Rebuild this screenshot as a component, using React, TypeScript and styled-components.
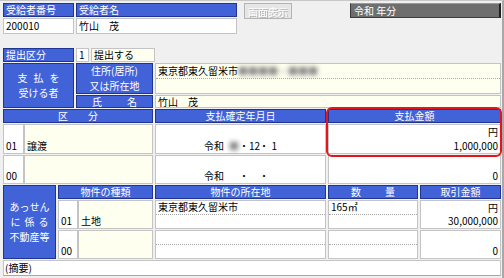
import styled, { createGlobalStyle } from 'styled-components';

const BLUE = '#4262d8';
const BLUE_EDGE = '#1f3596';
const CREAM = '#fffff0';
const LINE = '#c4c4c4';

const GlobalStyle = createGlobalStyle`
  html, body {
    margin: 0;
    padding: 0;
    background: #f0f0f0;
  }
  body {
    font-family: "Noto Sans CJK JP", "Noto Sans", sans-serif;
    font-size: 10px;
    color: #000;
  }
`;

const Page = styled.div`
  position: relative;
  box-sizing: border-box;
  width: 504px;
  height: 278px;
  padding: 2px 1px 0 3px;
  border-top: 1px solid #c8c8c8;
  border-right: 2px solid #a8a8a8;
  background: #f0f0f0;
  overflow: hidden;
`;

const TopBar = styled.div`
  display: flex;
  align-items: flex-start;
`;

const RecipientTable = styled.div`
  display: grid;
  grid-template-columns: 71px 161px;
  grid-template-rows: 14px 16px;
  column-gap: 2px;
  row-gap: 1px;
`;

const HeadCell = styled.div<{ $left?: boolean }>`
  box-sizing: border-box;
  background: ${BLUE};
  border: 1px solid ${BLUE_EDGE};
  color: #fff;
  display: flex;
  align-items: center;
  justify-content: ${(p) => (p.$left ? 'flex-start' : 'center')};
  padding: ${(p) => (p.$left ? '0 2px' : '0')};
  line-height: 1;
  white-space: nowrap;
`;

const SpreadHead = styled(HeadCell)<{ $pad: number }>`
  justify-content: space-between;
  padding: 0 ${(p) => p.$pad}px;
`;

const LabelBlock = styled(HeadCell)<{ $rows: number }>`
  grid-row: span ${(p) => p.$rows};
  flex-direction: column;
  gap: 5px;
`;

const LabelLine = styled.span<{ $spacing?: number }>`
  letter-spacing: ${(p) => p.$spacing ?? 0}px;
  margin-right: -${(p) => p.$spacing ?? 0}px;
`;

const ValueCell = styled.div<{ $cream?: boolean; $right?: boolean }>`
  box-sizing: border-box;
  background: ${(p) => (p.$cream ? CREAM : '#fff')};
  border: 1px solid ${LINE};
  padding: 0 2px;
  display: flex;
  align-items: center;
  justify-content: ${(p) => (p.$right ? 'flex-end' : 'flex-start')};
  line-height: 1;
  white-space: nowrap;
`;

const DisabledButton = styled.div`
  box-sizing: border-box;
  margin-left: 7px;
  width: 48px;
  height: 16px;
  background: #e6e6e6;
  border: 1px solid #b4b4b4;
  display: flex;
  align-items: center;
  justify-content: center;
  color: #fff;
  text-shadow: 1px 1px 0 #b0b0b0;
  filter: blur(0.5px);
`;

const YearBox = styled.div`
  box-sizing: border-box;
  margin-left: auto;
  width: 151px;
  height: 15px;
  background: #6e6e6e;
  border: 1px solid #3c3c3c;
  border-right: 2px solid #1e1e1e;
  border-top-color: #9a9a9a;
  color: #fff;
  display: flex;
  align-items: center;
  padding-left: 3px;
  line-height: 1;
`;

const Form = styled.div`
  margin-top: 14px;
  display: flex;
  flex-direction: column;
  gap: 1px;
`;

const SubmitRow = styled.div`
  display: grid;
  grid-template-columns: 71px 13px 64px;
  grid-template-rows: 14px;
  column-gap: 2px;
`;

const PayeeBlock = styled.div`
  display: grid;
  grid-template-columns: 71px 77px 1fr;
  grid-template-rows: 31px 13px;
  column-gap: 2px;
  row-gap: 1px;
`;

const SectionA = styled.div`
  display: grid;
  grid-template-columns: 150px 171px 1fr;
  grid-template-rows: 14px 30px 29px;
  column-gap: 2px;
  row-gap: 1px;
`;

const SectionB = styled.div`
  display: grid;
  grid-template-columns: 53px 95px 171px 90px 1fr;
  grid-template-rows: 14px 29px 29px;
  column-gap: 2px;
  row-gap: 1px;
`;

const CodeSplit = styled.div`
  display: flex;
  min-width: 0;
`;

const Stack = styled.div<{ $cream?: boolean; $width?: number; $right?: boolean }>`
  box-sizing: border-box;
  ${(p) => (p.$width ? `width: ${p.$width}px; flex: none;` : 'flex: 1;')}
  background: ${(p) => (p.$cream ? CREAM : '#fff')};
  border: 1px solid ${LINE};
  display: grid;
  grid-template-rows: 1fr 1fr;
  text-align: ${(p) => (p.$right ? 'right' : 'left')};
  line-height: 1;
  white-space: nowrap;
`;

const Line = styled.div<{ $dotted?: boolean; $center?: boolean }>`
  display: flex;
  align-items: center;
  padding: 0 2px;
  border-bottom: ${(p) => (p.$dotted ? '1px dotted #a8a8a8' : 'none')};
  justify-content: ${(p) => (p.$center ? 'center' : 'normal')};
`;

const RightLine = styled(Line)`
  justify-content: flex-end;
`;

const DateText = styled.div`
  display: flex;
  align-items: center;
`;

const Slot = styled.span<{ $w: number }>`
  display: inline-block;
  width: ${(p) => p.$w}px;
  text-align: right;
`;

const Blurred = styled.span`
  color: #808080;
  filter: blur(2.6px);
`;

const MemoRow = styled.div`
  box-sizing: border-box;
  height: 16px;
  background: #fff;
  border: 1px solid ${LINE};
  border-bottom: 1px solid #a8a8a8;
  display: flex;
  align-items: center;
  padding-left: 1px;
  line-height: 1;
`;

const Highlight = styled.div`
  position: absolute;
  left: 326px;
  top: 106px;
  width: 176px;
  height: 50px;
  box-sizing: border-box;
  border: 2.5px solid #e4161c;
  border-radius: 6px;
  pointer-events: none;
`;

const DateValue = ({ year, month, day }: { year?: boolean; month?: string; day?: string }) => (
  <DateText>
    <span>令和</span>
    <Slot $w={15}>{year ? <Blurred>■</Blurred> : ''}</Slot>
    <span>・</span>
    <Slot $w={10}>{month ?? ''}</Slot>
    <span>・</span>
    <Slot $w={8}>{day ?? ''}</Slot>
  </DateText>
);

const App = () => {
  return (
    <Page>
      <GlobalStyle />
      <TopBar>
        <RecipientTable>
          <HeadCell $left>受給者番号</HeadCell>
          <HeadCell $left>受給者名</HeadCell>
          <ValueCell>200010</ValueCell>
          <ValueCell>竹山　茂</ValueCell>
        </RecipientTable>
        <DisabledButton>画面表示</DisabledButton>
        <YearBox>令和 年分</YearBox>
      </TopBar>

      <Form>
        <SubmitRow>
          <HeadCell $left>提出区分</HeadCell>
          <ValueCell>1</ValueCell>
          <ValueCell $cream>提出する</ValueCell>
        </SubmitRow>

        <PayeeBlock>
          <LabelBlock $rows={2}>
            <LabelLine $spacing={6}>支払を</LabelLine>
            <LabelLine>受ける者</LabelLine>
          </LabelBlock>
          <LabelBlock $rows={1}>
            <span>住所(居所)</span>
            <span>又は所在地</span>
          </LabelBlock>
          <Stack $cream>
            <Line $dotted>
              東京都東久留米市<Blurred>■■■■－■■■</Blurred>
            </Line>
            <Line />
          </Stack>
          <SpreadHead $pad={15}>
            <span>氏</span>
            <span>名</span>
          </SpreadHead>
          <ValueCell $cream>竹山　茂</ValueCell>
        </PayeeBlock>

        <SectionA>
          <SpreadHead $pad={54}>
            <span>区</span>
            <span>分</span>
          </SpreadHead>
          <HeadCell>支払確定年月日</HeadCell>
          <HeadCell>支払金額</HeadCell>

          <CodeSplit>
            <Stack $width={21}>
              <Line />
              <Line>01</Line>
            </Stack>
            <Stack $cream>
              <Line />
              <Line>譲渡</Line>
            </Stack>
          </CodeSplit>
          <Stack>
            <Line />
            <Line $center>
              <DateValue year month="12" day="1" />
            </Line>
          </Stack>
          <Stack>
            <RightLine>円</RightLine>
            <RightLine>1,000,000</RightLine>
          </Stack>

          <CodeSplit>
            <Stack $width={21}>
              <Line />
              <Line>00</Line>
            </Stack>
            <Stack $cream>
              <Line />
              <Line />
            </Stack>
          </CodeSplit>
          <Stack>
            <Line />
            <Line $center>
              <DateValue />
            </Line>
          </Stack>
          <Stack>
            <Line />
            <RightLine>0</RightLine>
          </Stack>
        </SectionA>

        <SectionB>
          <LabelBlock $rows={3}>
            <span>あっせん</span>
            <LabelLine $spacing={4}>に係る</LabelLine>
            <span>不動産等</span>
          </LabelBlock>
          <HeadCell>物件の種類</HeadCell>
          <HeadCell>物件の所在地</HeadCell>
          <SpreadHead $pad={22}>
            <span>数</span>
            <span>量</span>
          </SpreadHead>
          <HeadCell>取引金額</HeadCell>

          <CodeSplit>
            <Stack $width={20}>
              <Line />
              <Line>01</Line>
            </Stack>
            <Stack $cream>
              <Line />
              <Line>土地</Line>
            </Stack>
          </CodeSplit>
          <Stack>
            <Line $dotted>東京都東久留米市</Line>
            <Line />
          </Stack>
          <Stack>
            <Line $dotted>165㎡</Line>
            <Line />
          </Stack>
          <Stack>
            <RightLine>円</RightLine>
            <RightLine>30,000,000</RightLine>
          </Stack>

          <CodeSplit>
            <Stack $width={20}>
              <Line />
              <Line>00</Line>
            </Stack>
            <Stack $cream>
              <Line />
              <Line />
            </Stack>
          </CodeSplit>
          <Stack>
            <Line $dotted />
            <Line />
          </Stack>
          <Stack>
            <Line $dotted />
            <Line />
          </Stack>
          <Stack>
            <Line />
            <RightLine>0</RightLine>
          </Stack>
        </SectionB>

        <MemoRow>(摘要)</MemoRow>
      </Form>

      <Highlight />
    </Page>
  );
};

export default App;
